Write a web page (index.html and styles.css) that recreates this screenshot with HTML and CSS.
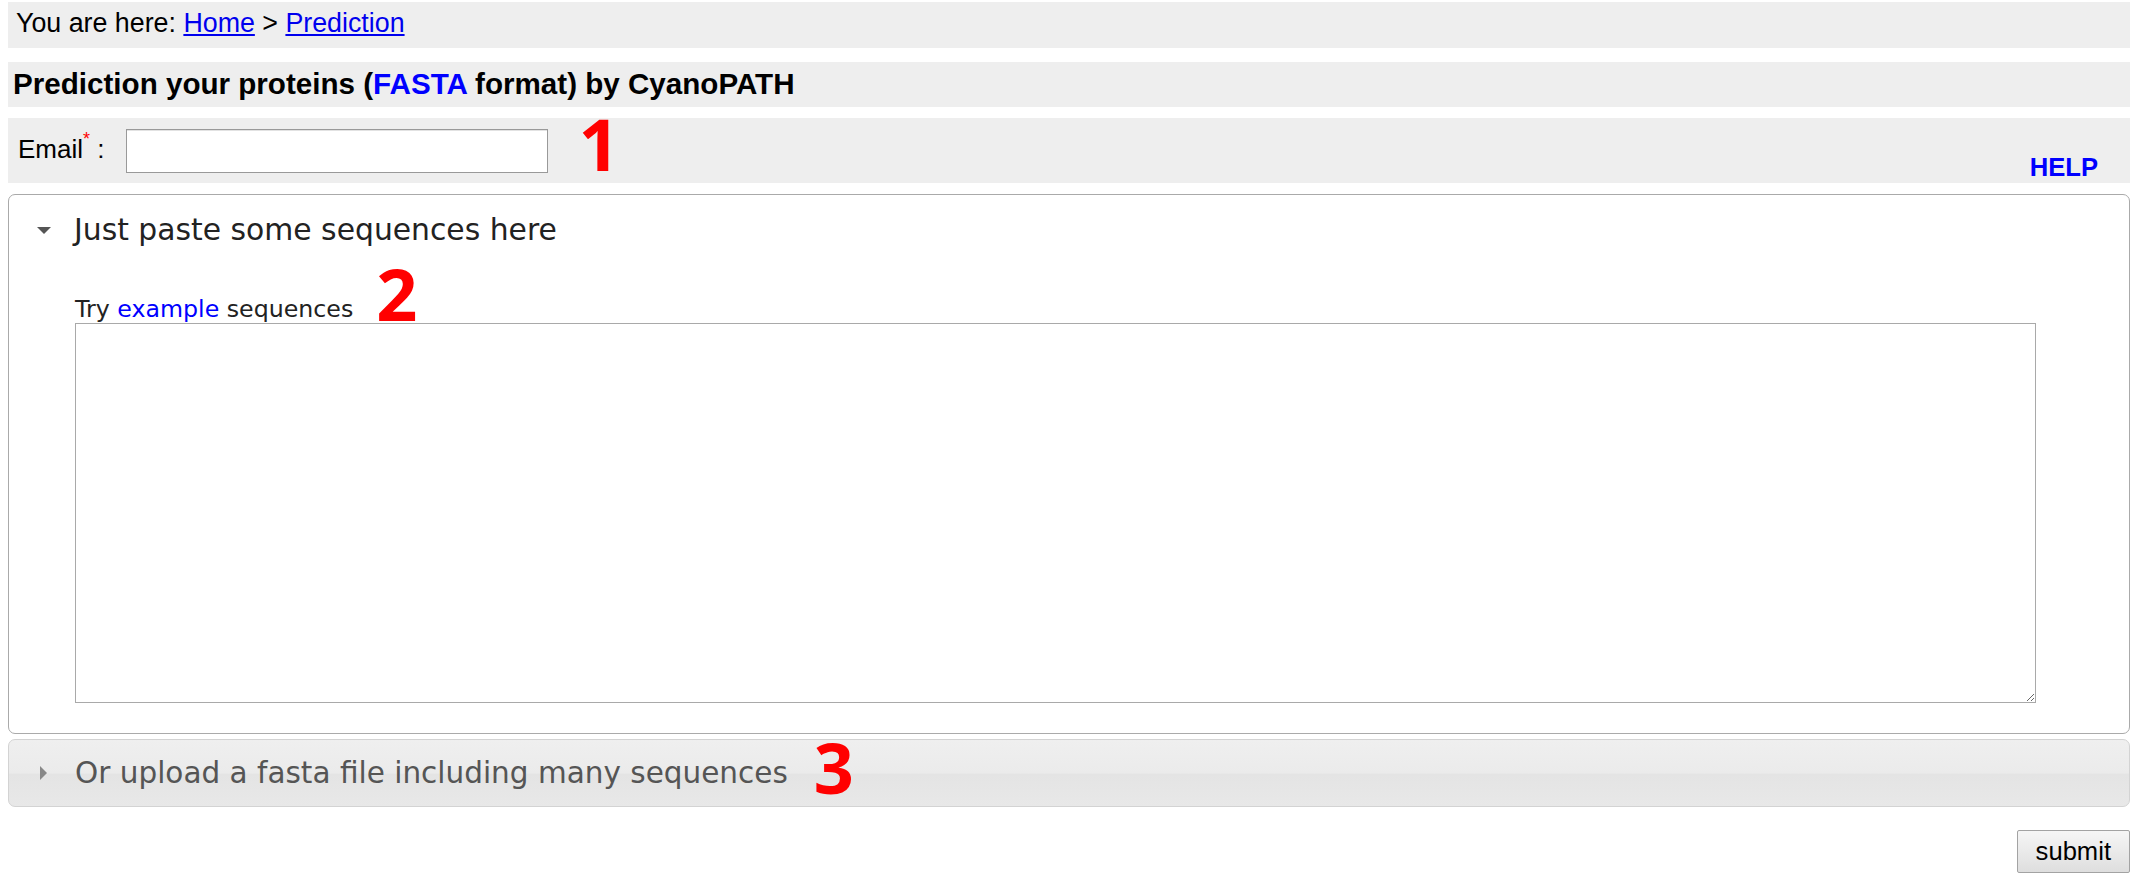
FILE: index.html
```html
<!DOCTYPE html>
<html lang="en">
<head>
    <meta charset="UTF-8">
    <meta name="viewport" content="width=device-width, initial-scale=1.0">
    <title>CyanoPATH - Prediction</title>
    <link rel="stylesheet" href="styles.css">
</head>
<body>
    <div class="page">
        <div class="crumbs">You are here: <a href="#">Home</a> &gt; <a href="#">Prediction</a></div>

        <h2 class="title">Prediction your proteins (<a href="#">FASTA</a> format) by CyanoPATH</h2>

        <div class="email-row">
            <label for="email">Email<sup>*</sup> :</label>
            <input type="text" id="email" name="email">
            <span class="mark mark-1">1</span>
            <a class="help" href="#">HELP</a>
        </div>

        <div class="accordion">
            <div class="panel">
                <div class="panel-head"><span class="tri tri-down"></span><span>Just paste some sequences here</span></div>
                <div class="panel-body">
                    <p class="try"><span>Try <a href="#">example</a> sequences</span><span class="mark mark-2">2</span></p>
                    <textarea name="sequences"></textarea>
                </div>
            </div>
            <div class="panel-head closed"><span class="tri tri-right"></span><span>Or upload a fasta file including many sequences</span><span class="mark mark-3">3</span></div>
        </div>

        <div class="actions">
            <button type="submit">submit</button>
        </div>
    </div>
</body>
</html>
```

FILE: styles.css
```css
body {
    margin: 0;
    padding: 0;
    font-family: "Liberation Sans", Arial, sans-serif;
    font-size: 26px;
    color: #000;
    background: #fff;
}

.page {
    padding: 2px 12px 0 8px;
}

a {
    color: #0000ee;
}

.crumbs {
    box-sizing: border-box;
    height: 46px;
    padding: 7px 8px 0;
    font-size: 26.8px;
    line-height: 29px;
    background-color: #eeeeee;
    margin-bottom: 14px;
}

.title {
    box-sizing: border-box;
    height: 45px;
    margin: 0 0 11px;
    padding: 5px 5px 0;
    font-size: 29.6px;
    line-height: 33px;
    font-weight: bold;
    background-color: #eeeeee;
}

.title a {
    color: #0000ff;
    text-decoration: none;
}

.email-row {
    display: flex;
    align-items: center;
    box-sizing: border-box;
    height: 65px;
    padding: 0 10px;
    margin-bottom: 11px;
    background-color: #eeeeee;
}

.email-row label {
    line-height: 29px;
}

.email-row sup {
    position: relative;
    top: -13px;
    vertical-align: baseline;
    font-size: 18px;
    color: #ff0000;
}

.email-row input {
    box-sizing: border-box;
    width: 422px;
    height: 44px;
    margin: 0 0 0 22px;
    padding: 2px 6px;
    font-size: 20px;
    border: 1px solid #999999;
    box-shadow: inset 0 1px 0 #e2e2e2;
    background: #fff;
}

.help {
    margin-left: auto;
    margin-right: 22px;
    margin-bottom: 3px;
    align-self: flex-end;
    font-size: 25.6px;
    font-weight: bold;
    line-height: 26px;
    color: #0000ff;
    text-decoration: none;
}

/* red numbers drawn over the form */
.mark {
    position: relative;
    align-self: center;
    height: 0;
    line-height: 0;
    font-family: "Open Sans", sans-serif;
    font-weight: bold;
    font-size: 72px;
    color: #ff0000;
}

.mark-1 {
    top: -8px;
    margin-left: 30px;
}

.mark-2 {
    top: -17px;
    margin-left: 23px;
}

.mark-3 {
    top: -6px;
    margin-left: 26px;
    font-size: 70px;
}

.accordion {
    font-family: "DejaVu Sans", Verdana, sans-serif;
}

.panel {
    border: 1px solid #aaaaaa;
    border-radius: 7px;
    background: #fff;
}

.panel-head {
    display: flex;
    align-items: center;
    padding: 18px 0 18px 28px;
    font-size: 29.8px;
    line-height: 34px;
    color: #222;
}

.panel-head.closed {
    margin-top: 5px;
    padding-top: 16px;
    padding-bottom: 16px;
    font-size: 29.5px;
    color: #555;
    border: 1px solid #d3d3d3;
    border-radius: 7px;
    background: linear-gradient(to bottom, #efefef 0%, #ebebeb 50%, #e4e4e4 52%, #e8e8e8 100%);
}

.tri {
    width: 0;
    height: 0;
    margin-right: 23px;
}

.tri-down {
    border-left: 7px solid transparent;
    border-right: 7px solid transparent;
    border-top: 7px solid #555;
}

.tri-right {
    margin-left: 3px;
    margin-right: 28px;
    border-top: 7px solid transparent;
    border-bottom: 7px solid transparent;
    border-left: 7px solid #888;
}

.panel-body {
    padding: 31px 93px 30px 66px;
}

.try {
    display: flex;
    margin: 0;
    font-size: 23.7px;
    line-height: 27px;
    color: #222;
}

.try a {
    color: #0000ff;
    text-decoration: none;
}

.panel-body textarea {
    display: block;
    box-sizing: border-box;
    width: 100%;
    height: 380px;
    margin: 0;
    border: 1px solid #a9a9a9;
    background: #fff;
}

.actions {
    margin-top: 23px;
    text-align: right;
}

.actions button {
    box-sizing: border-box;
    height: 43px;
    padding: 0 18px;
    font-family: "Liberation Sans", Arial, sans-serif;
    font-size: 25.6px;
    color: #000;
    border: 1px solid #a3a3a3;
    border-radius: 2px;
    background: linear-gradient(to bottom, #f6f6f6, #dedede);
}
```
